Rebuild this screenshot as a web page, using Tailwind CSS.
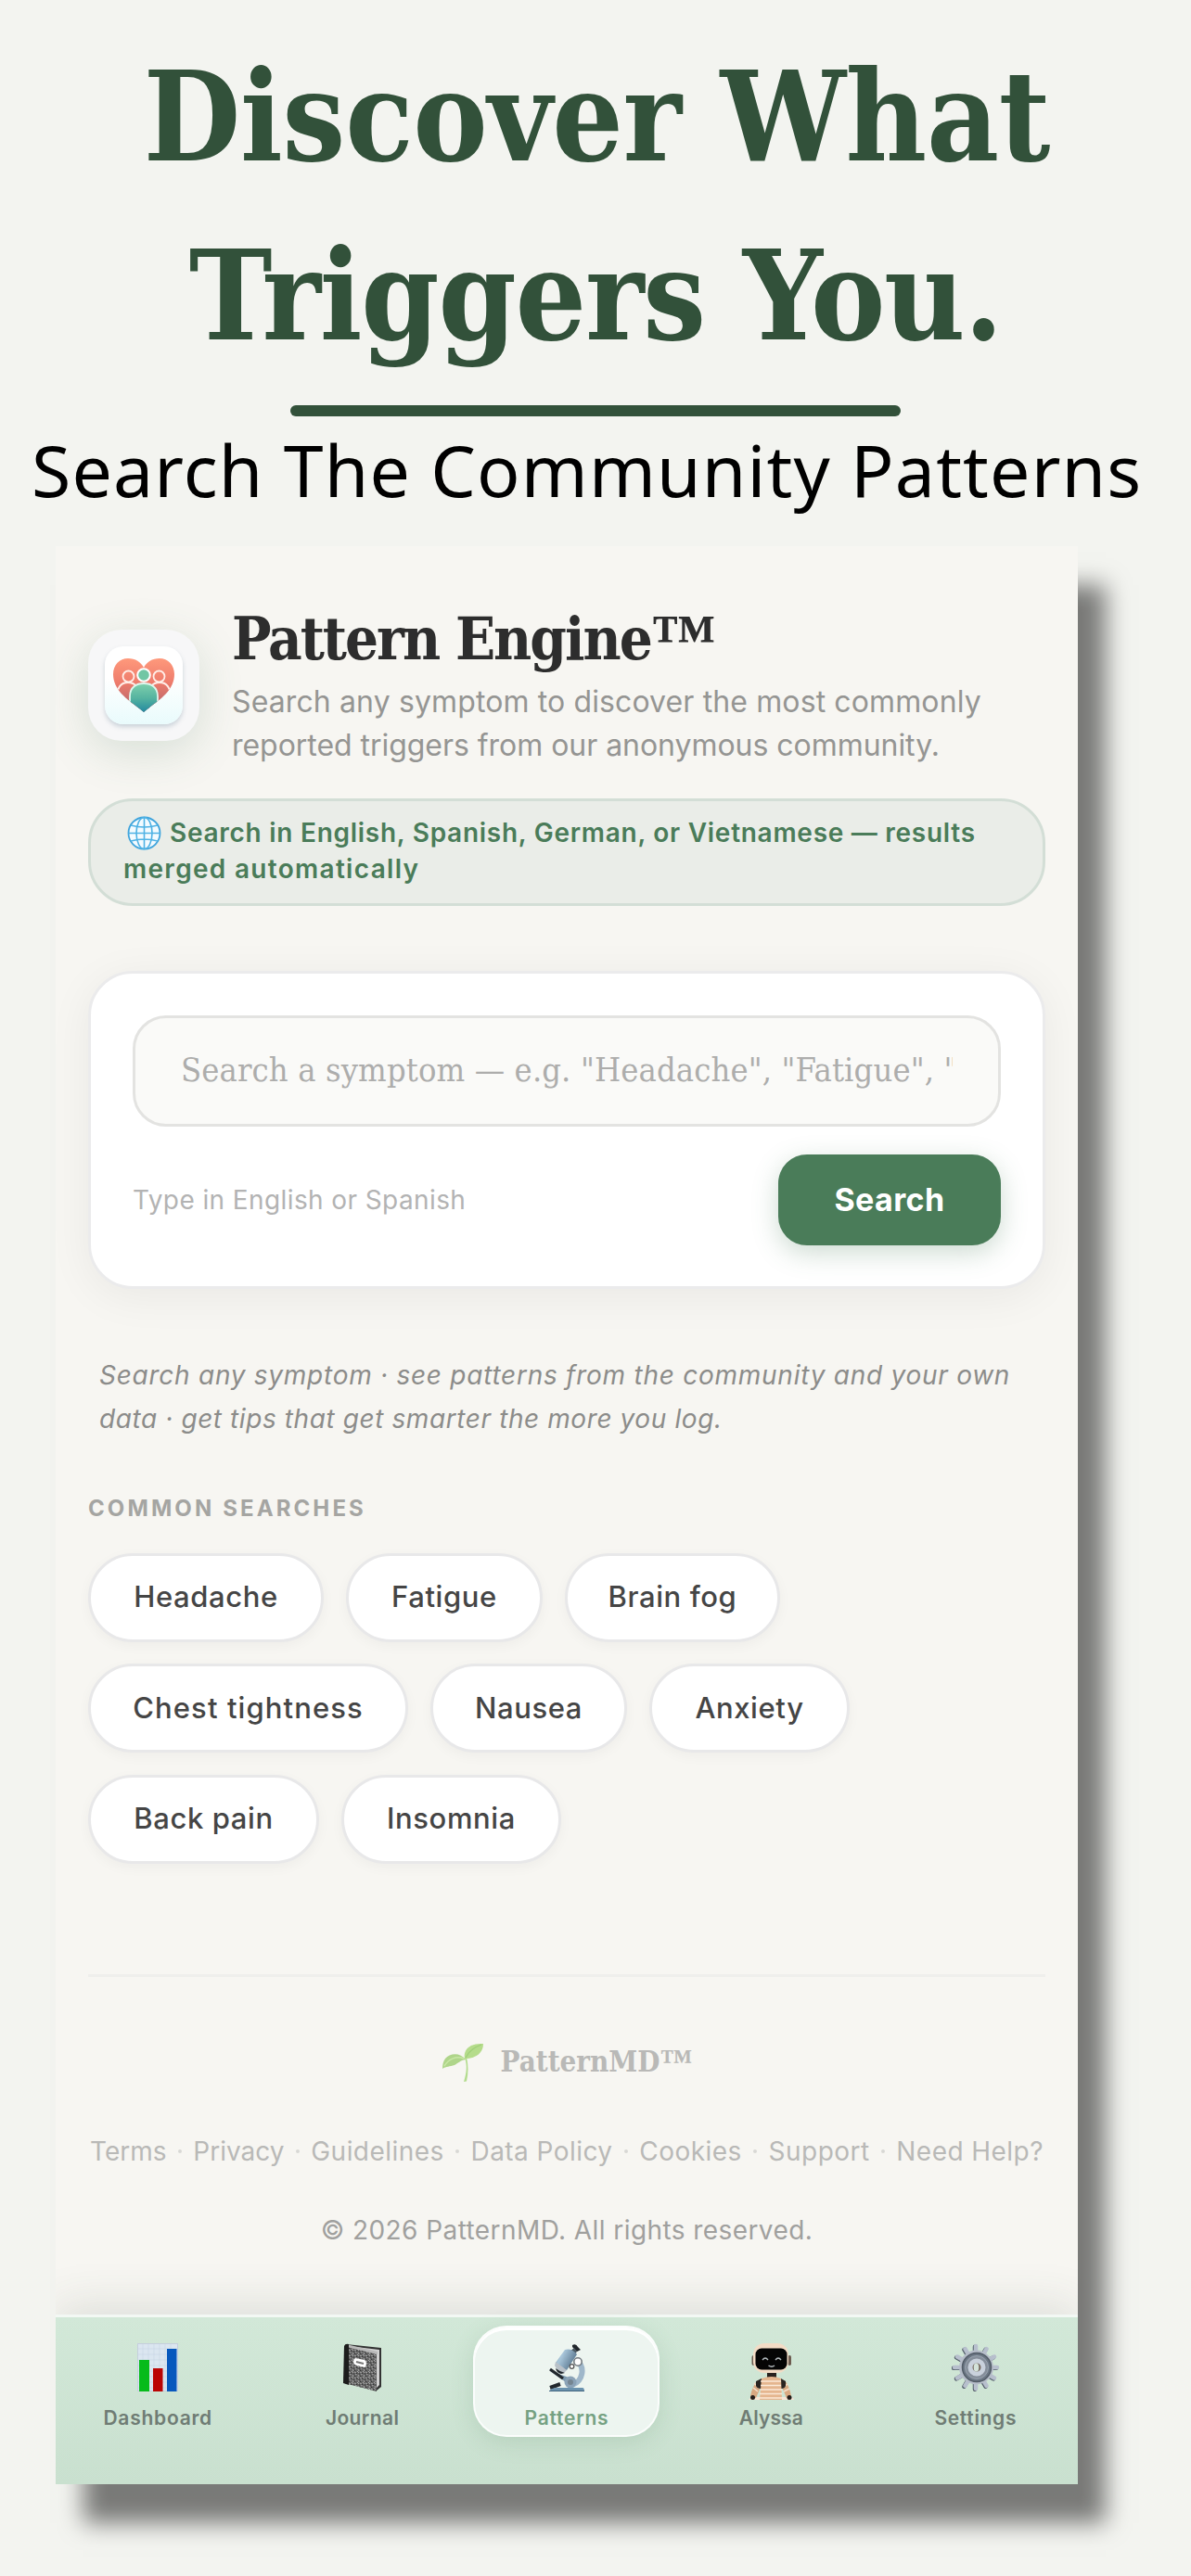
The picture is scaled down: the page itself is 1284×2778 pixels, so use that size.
<!DOCTYPE html>
<html lang="en">
<head>
    <meta charset="UTF-8">
    <meta name="viewport" content="width=device-width, initial-scale=1.0">
    <title>PatternMD - Pattern Engine</title>
    <script src="https://cdn.jsdelivr.net/npm/@tailwindcss/browser@4"></script>
</head>
<body class="min-h-screen bg-[#f3f4f0] font-['Inter','Liberation_Sans',sans-serif] overflow-hidden">

    <!-- Headline -->
    <header class="flex flex-col items-center pt-[30px]">
        <h1 class="text-center font-['DejaVu_Serif_Condensed','DejaVu_Serif',serif] text-[134px] leading-[193px] font-bold text-[#32513a]">
            <span class="block whitespace-nowrap pl-[3px] tracking-[-0.300px]">Discover What</span>
            <span class="block whitespace-nowrap tracking-[-1.2px]">Triggers You.</span>
        </h1>
        <div class="mt-[21px] h-3 w-[658px] rounded-full bg-[#32513a]"></div>
        <p class="mt-[8px] self-start pl-[34px] whitespace-nowrap font-['Noto_Sans',sans-serif] text-[77px] leading-[100px] tracking-[1.150px] text-black">Search The Community Patterns</p>
    </header>

    <!-- App screen -->
    <main class="mt-[32px] ml-[60px] w-[1102px] h-[2090px] bg-[#f7f6f2] shadow-[30px_42px_24px_rgba(0,0,0,0.5)]">
        <div class="flex h-full flex-col overflow-hidden">
            <div class="px-[35px]">

                <div class="mt-[62px] flex items-center gap-[35px]">
                    <div class="flex size-[120px] shrink-0 items-center justify-center rounded-[36px] bg-[#f7f7f8] shadow-[0_12px_48px_rgba(74,124,89,0.18)]">
                        <div class="flex size-[84px] items-center justify-center rounded-[20px] bg-linear-to-b from-white from-40% to-[#e9fbfc] shadow-[0_3px_5px_rgba(90,120,140,0.28)]">
                            <svg class="w-[68px] h-[60px]" viewBox="0 0 68 60">
                                <defs>
                                    <linearGradient id="coral" x1="0" y1="0" x2="0" y2="60" gradientUnits="userSpaceOnUse">
                                        <stop offset="0" stop-color="#ff9a7c"/><stop offset=".45" stop-color="#ee7c6c"/><stop offset="1" stop-color="#a8606c"/>
                                    </linearGradient>
                                    <linearGradient id="teal" x1="0" y1="0" x2="0" y2="1">
                                        <stop offset="0" stop-color="#7fd0ac"/><stop offset=".5" stop-color="#55b3a0"/><stop offset="1" stop-color="#1f86a0"/>
                                    </linearGradient>
                                    <clipPath id="heart"><path d="M34 59C20 47 1 37 1 18 1 8 8 1 17 1c8 0 14 4 17 10C37 5 43 1 51 1c9 0 16 7 16 17 0 19-19 29-33 41z"/></clipPath>
                                </defs>
                                <g clip-path="url(#heart)">
                                    <rect width="68" height="60" fill="url(#coral)"/>
                                    <g stroke="#ffeee8" stroke-width="1.800" fill="url(#coral)">
                                        <path d="M5 44c0-12 5-17 12-17s13 5 13 17v16H5z"/>
                                        <path d="M38 44c0-12 6-17 13-17s12 5 12 17v16H38z"/>
                                        <circle cx="17.500" cy="20.500" r="6"/>
                                        <circle cx="50.500" cy="20.500" r="6"/>
                                    </g>
                                    <path d="M19 60V42c0-10 7-14 15-14s15 4 15 14v18z" fill="url(#teal)" stroke="#ddf7ee" stroke-width="1.800"/>
                                </g>
                                <circle cx="34" cy="19" r="6.800" fill="#72c6a4" stroke="#fff" stroke-width="2"/>
                            </svg>
                        </div>
                    </div>
                    <div>
                        <h2 class="whitespace-nowrap font-['DejaVu_Serif_Condensed','DejaVu_Serif',serif] text-[63px] leading-[76px] font-bold tracking-[-2px] text-[#2d2d2d]">Pattern Engine<span class="font-['Liberation_Serif',serif] text-[70px] leading-[0]">™</span></h2>
                        <p class="mt-[6px] whitespace-nowrap text-[32px] leading-[47.300px] tracking-[0.120px] text-[#959593]">Search any symptom to discover the most commonly<br><span class="tracking-[-0.040px]">reported triggers from our anonymous community.</span></p>
                    </div>
                </div>

                <div class="mt-[33px] rounded-[48px] border-3 border-[#d3ded6] bg-[#eaede8] px-[35px] pt-[15px] pb-[16px] text-[28px] leading-[39.500px] font-semibold whitespace-nowrap text-[#4a7c59]">
                    <div class="flex items-center tracking-[0.730px]">
                        <svg class="ml-1 mr-[9px] size-[37px]" viewBox="0 0 37 37" fill="none">
                            <circle cx="18.500" cy="18.500" r="17" fill="#f4fbff" stroke="#3fa4dc" stroke-width="1.800"/>
                            <g stroke="#4fb2e4" stroke-width="1.600">
                                <ellipse cx="18.500" cy="18.500" rx="8.500" ry="17"/>
                                <path d="M18.500 1.500v34M1.500 18.500h34M4 10q14.500 4 29 0M4 27q14.500-4 29 0"/>
                            </g>
                        </svg>
                        Search in English, Spanish, German, or Vietnamese — results
                    </div>
                    <div class="tracking-[1.300px]">merged automatically</div>
                </div>

                <!-- Search box -->
                <section class="mt-[70px] h-[343px] rounded-[48px] border-3 border-[#ebebec] bg-white p-[45px] shadow-[0_8px_48px_rgba(0,0,0,0.06)]">
                    <input type="text" placeholder='Search a symptom — e.g. "Headache", "Fatigue", "Brain fog"'
                           class="block h-[120px] w-full rounded-[36px] border-3 border-[#e3e3e1] bg-[#fafaf8] px-[49px] pb-[2px] font-['DejaVu_Serif_Condensed','DejaVu_Serif',serif] text-[36px] tracking-[0.110px] placeholder:text-[#adadac]">
                    <div class="mt-[30px] flex items-center justify-between">
                        <span class="text-[28px] tracking-[0.400px] text-[#b3b3b3]">Type in English or Spanish</span>
                        <button class="h-[98px] w-[240px] rounded-[31px] bg-[#4a7c59] text-[34px] font-bold tracking-[0.400px] text-white shadow-[0_8px_28px_rgba(74,124,89,0.28)]">Search</button>
                    </div>
                </section>

                <p class="mt-[70px] pl-3 whitespace-nowrap text-[28px] leading-[47px] italic tracking-[0.740px] text-[#8c8c8a]">Search any symptom · see patterns from the community and your own<br><span class="tracking-[0.590px]">data · get tips that get smarter the more you log.</span></p>

                <h3 class="mt-[55px] text-[24px] leading-[36px] font-bold tracking-[3.100px] text-[#a5a5a2]">COMMON SEARCHES</h3>

                <div class="mt-[30px] flex flex-wrap gap-x-6 gap-y-[23.500px] text-[31px] font-medium tracking-[0.600px] text-[#454545] *:h-24 *:rounded-full *:border-3 *:border-[#e8e8e9] *:bg-white *:whitespace-nowrap *:shadow-[0_4px_14px_rgba(0,0,0,0.04)]">
                    <button class="w-[254px]">Headache</button>
                    <button class="w-[212px]">Fatigue</button>
                    <button class="w-[232px] mr-40">Brain fog</button>
                    <button class="w-[345px] tracking-[1.100px]">Chest tightness</button>
                    <button class="w-[212px]">Nausea</button>
                    <button class="w-[216px] mr-40">Anxiety</button>
                    <button class="w-[249px]">Back pain</button>
                    <button class="w-[237px]">Insomnia</button>
                </div>

                <!-- Footer -->
                <footer class="mt-[119px] border-t-3 border-[#efefec] pt-[68px]">
                    <div class="flex h-12 items-center justify-center gap-[18px]">
                        <svg class="w-[46px] h-[42px]" viewBox="0 0 46 42">
                            <path d="M25 16c3 9 2 16-1 26l3-.5c2-9 2-17 0-26z" fill="#b3dc8e"/>
                            <path d="M25 17C23 7 31 0 45 1c0 9-7 16-20 16z" fill="#b5dc8b"/>
                            <path d="M26 16c3-6 8-11 17-14" stroke="#9fcf78" stroke-width="1.200" fill="none"/>
                            <path d="M26 18C20 10 9 11 4 17c-2 3-3 6-3 11 4-3 8-2 13-4 4-2 6-5 12-6z" fill="#afd58a"/>
                            <path d="M24 17C16 14 8 17 3 25" stroke="#c9e8a6" stroke-width="1.500" fill="none"/>
                        </svg>
                        <span class="font-['DejaVu_Serif_Condensed','DejaVu_Serif',serif] text-[31px] font-bold text-[#b9b9b7]">PatternMD<span class="font-['Liberation_Serif',serif] text-[35px] leading-[0]">™</span></span>
                    </div>
                    <div class="mt-[52px] flex items-center justify-between px-[2px] text-[28px] leading-10 tracking-[0.450px] whitespace-nowrap text-[#b9b9b7]">
                        <a class="tracking-normal">Terms</a><span class="size-[4px] rounded-full bg-[#d8d8d5]"></span>
                        <a class="tracking-normal">Privacy</a><span class="size-[4px] rounded-full bg-[#d8d8d5]"></span>
                        <a>Guidelines</a><span class="size-[4px] rounded-full bg-[#d8d8d5]"></span>
                        <a>Data Policy</a><span class="size-[4px] rounded-full bg-[#d8d8d5]"></span>
                        <a>Cookies</a><span class="size-[4px] rounded-full bg-[#d8d8d5]"></span>
                        <a>Support</a><span class="size-[4px] rounded-full bg-[#d8d8d5]"></span>
                        <a>Need Help?</a>
                    </div>
                    <p class="mt-[45px] text-center text-[28px] leading-10 tracking-[0.420px] text-[#a0a09e]">© 2026 PatternMD. All rights reserved.</p>
                </footer>
            </div>

            <!-- Bottom nav -->
            <nav class="mt-auto grid h-[183px] shrink-0 grid-cols-5 justify-items-center border-t-3 border-[#f3f8f4] bg-linear-to-b from-[#d2e8d8] to-[#c9e0cf] text-[21px] leading-[30px] font-semibold text-[#6f7c74] shadow-[0_-8px_48px_rgba(60,80,65,0.14)]">
                <a class="flex w-[201px] flex-col items-center pt-[28px]">
                    <svg class="w-[44px] h-[52px]" viewBox="0 0 44 52">
                        <rect width="44" height="52" fill="#dbe6f0"/>
                        <path d="M0 6h44M0 12h44M0 18h44M0 24h44M0 30h44M0 36h44M0 42h44M0 48h44M6 0v52M12 0v52M18 0v52M24 0v52M30 0v52M36 0v52" stroke="#cbd7e6" stroke-width=".7"/>
                        <rect x=".5" y=".5" width="43" height="51" fill="none" stroke="#c5cfdd"/>
                        <rect x="2" y="18" width="11" height="34" fill="#06bb1b"/>
                        <rect x="17" y="27" width="10.500" height="25" fill="#bb0505"/>
                        <rect x="32" y="6" width="10.500" height="46" fill="#0758bd"/>
                    </svg>
                    <span class="mt-[14px] tracking-[0.750px]">Dashboard</span>
                </a>
                <a class="flex w-[201px] flex-col items-center pt-[28px]">
                    <svg class="w-[42px] h-[52px]" viewBox="0 0 42 52">
                        <defs><pattern id="marble" width="6" height="6" patternUnits="userSpaceOnUse"><rect width="6" height="6" fill="#626262"/><path d="M0 1l2 1M3 0l2 2M1 4l2-1M4 4l1 2" stroke="#a9a9a9" stroke-width="1"/><path d="M2 2l1 1M5 3l1 0M0 5l1 1" stroke="#343434" stroke-width="1.200"/></pattern></defs>
                        <path d="M3 1l38 4v42l-5 4-4-4z" fill="#333"/>
                        <path d="M6 3l33 4v38l-4 4z" fill="#d2d2d2"/>
                        <path d="M5 3l31 8v41L1 43V4z" fill="url(#marble)"/>
                        <path d="M3 1l34 8v3L4 4z" fill="#b9b9b9"/>
                        <path d="M1 3q1-3 5-2v44L0 43z" fill="#1c1c1c"/>
                        <path d="M13 16l10 2q2 1 2 4t-2 4l-8-2q-4-1-4-4t2-4z" fill="#fff"/>
                        <path d="M14 20l8 2" stroke="#777" stroke-width="2"/>
                    </svg>
                    <span class="mt-[14px] tracking-[0.370px]">Journal</span>
                </a>
                <a class="mt-[9px] flex h-[120px] w-[201px] flex-col items-center rounded-[36px] border-2 border-white/80 bg-[#edf5f0] pt-[17px] text-[#75a182] shadow-[0_6px_24px_rgba(74,124,89,0.16),inset_0_3px_0_#ffffff]">
                    <svg class="w-[40px] h-[52px]" viewBox="0 0 40 52">
                        <defs><linearGradient id="tube" x1="0" y1="0" x2="1" y2=".5"><stop offset="0" stop-color="#6f8fa8"/><stop offset=".35" stop-color="#a9c6da"/><stop offset="1" stop-color="#56748c"/></linearGradient></defs>
                        <path d="M30 18c11 8 7 23-4 27" fill="none" stroke="#9fb7ca" stroke-width="6"/>
                        <path d="M2 30l17 12 6-4-22-8z" fill="#7c99ae"/>
                        <path d="M2 28l14 10" stroke="#22282d" stroke-width="3.200"/>
                        <path d="M2 48l11-4" stroke="#22282d" stroke-width="4"/>
                        <circle cx="24" cy="42" r="6.500" fill="#8ba3b7"/><circle cx="24" cy="42" r="3" fill="#758592"/>
                        <path d="M1 52q2-4 9-4h27q2 0 2 4z" fill="#6c93ae"/>
                        <path d="M1 51.500h38" stroke="#42657f" stroke-width="1.200"/>
                        <path d="M26 2q4-2 6 2l3 3-4 2-5-5z" fill="#20262b"/>
                        <path d="M28 5l3 4-3 4-5-4z" fill="#4b5961"/>
                        <path d="M18 7q7-2 13 5L20 29q-7-1-12-8z" fill="url(#tube)"/>
                        <path d="M8 20l12 9-3 3q-7-1-10-8z" fill="#b9c1c8"/>
                        <path d="M8 27q5 4 10 5l-4 1q-5-1-6-6z" fill="#1f262c"/>
                        <circle cx="32" cy="20" r="4.200" fill="#fff" stroke="#747b80" stroke-width="1.600"/>
                        <circle cx="25.500" cy="25" r="2.300" fill="#fff" stroke="#555" stroke-width="1.300"/>
                    </svg>
                    <span class="mt-[14px] tracking-[0.750px]">Patterns</span>
                </a>
                <a class="flex w-[201px] flex-col items-center pt-[28px]">
                    <svg class="w-[50px] h-[61px]" viewBox="0 0 50 61">
                        <rect x="4.500" y="13" width="4" height="11" rx="2" fill="#6d5c50"/><rect x="43.500" y="13" width="3.500" height="11" rx="1.700" fill="#6d5c50"/>
                        <rect x="6" y="0" width="38" height="32" rx="12" fill="#f3dcc6"/>
                        <rect x="8.500" y="5.500" width="34" height="23" rx="6.500" fill="#050505"/>
                        <path d="M16 18q3-4 6 0M30 18q3-4 6 0M22.500 24q3.500 2.500 6.500 0" fill="none" stroke="#b5bcc0" stroke-width="1.300"/>
                        <path d="M21 32h10v6H21z" fill="#27211e"/>
                        <path d="M1 61q2-3 5-3h40q3 0 4 3z" fill="#f8e6d7"/>
                        <path d="M11 40q-6 6-8 17l6 2 6-14zM40 40q5 6 7 17l-5 2-6-14z" fill="#d8a982"/>
                        <path d="M7 43l5 5M6 48l5 4M43 44l-5 4M45 49l-6 3" stroke="#f6dfca" stroke-width="1.600"/>
                        <path d="M9 41l6-3v11q-5 0-6-3zM41 41l-5-3v11q4 0 5-3z" fill="#2a2421"/>
                        <path d="M15 38q11-4 21 0l1 23H13z" fill="#e5b68f"/>
                        <path d="M14 41h22M14 45.500h22M14 50h23M13 54.500h24M13 59h24" stroke="#fbe9d8" stroke-width="1.700"/>
                        <circle cx="5.500" cy="58.500" r="2.500" fill="#241e1b"/><circle cx="45" cy="58.500" r="2.500" fill="#241e1b"/>
                    </svg>
                    <span class="mt-[5px] tracking-[0.110px]">Alyssa</span>
                </a>
                <a class="flex w-[201px] flex-col items-center pt-[28px]">
                    <svg class="size-[52px]" viewBox="0 0 52 52">
                        <g stroke-width="4.500" stroke-linecap="round">
                            <g stroke="#55606b" transform="translate(-1 .8)"><path d="M26 3v46M3 26h46M14.500 6.100l23 39.800M6.100 14.500l39.800 23M6.100 37.500l39.800-23M14.500 45.900l23-39.800"/></g>
                            <g stroke="#b7bfcd"><path d="M26 3v46M3 26h46M14.500 6.100l23 39.800M6.100 14.500l39.800 23M6.100 37.500l39.800-23M14.500 45.900l23-39.800"/></g>
                        </g>
                        <circle cx="26.500" cy="26" r="18.500" fill="#b6bdc9"/>
                        <circle cx="27" cy="26" r="15.500" fill="#6c7784" stroke="#525c67" stroke-width="1.500"/>
                        <circle cx="27" cy="26" r="12.500" fill="#858e9a" stroke="#9aa4b0" stroke-width="1"/>
                        <circle cx="27" cy="26" r="7" fill="#75695e" stroke="#c9d1dc" stroke-width="5"/>
                        <ellipse cx="26.500" cy="26" rx="2.800" ry="4.500" fill="#d4e3da"/>
                    </svg>
                    <span class="mt-[14px] tracking-[0.680px]">Settings</span>
                </a>
            </nav>
        </div>
    </main>
</body>
</html>
